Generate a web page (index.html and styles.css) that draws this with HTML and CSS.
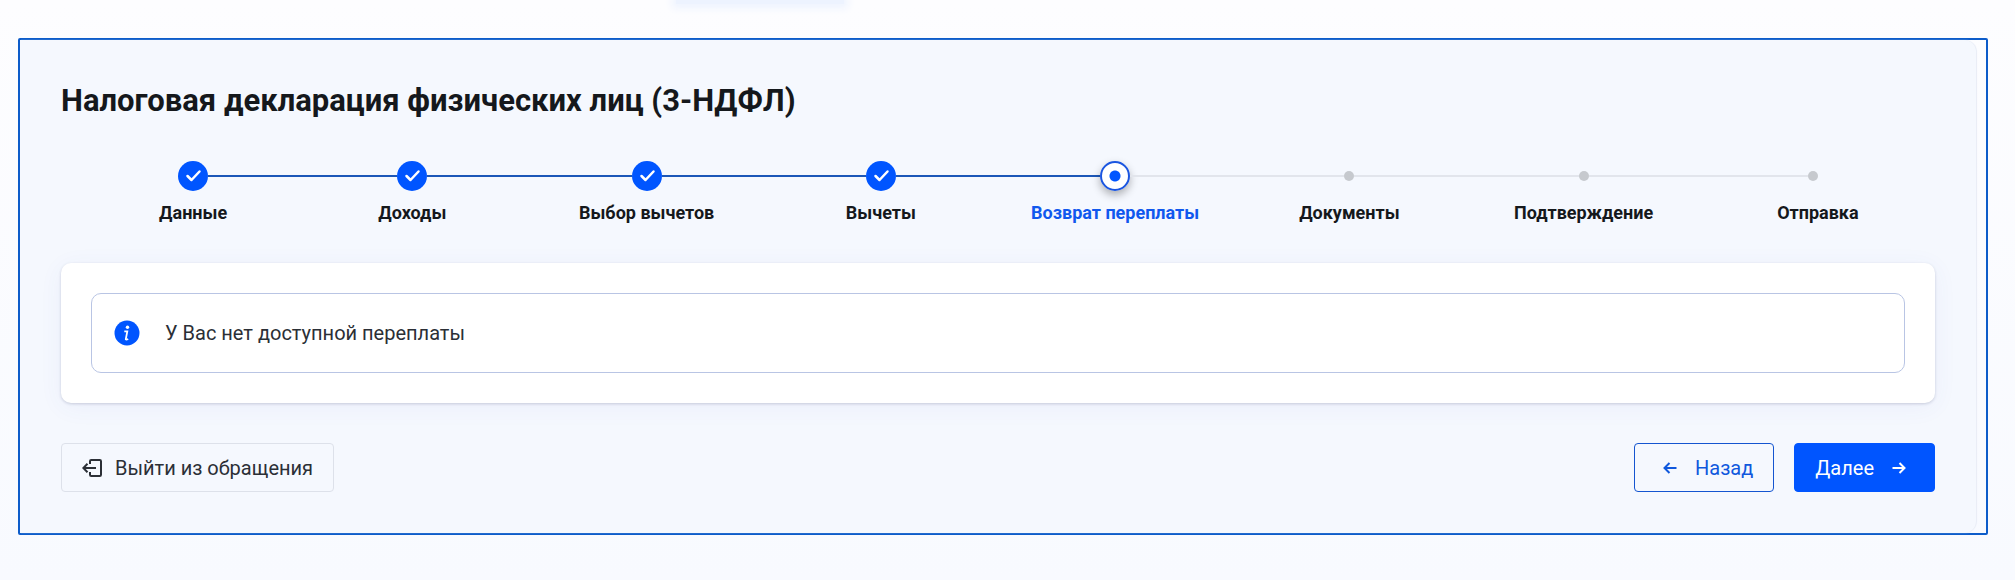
FILE: index.html
```html
<!DOCTYPE html>
<html lang="ru">
<head>
  <meta charset="UTF-8" />
  <meta name="viewport" content="width=device-width, initial-scale=1.0"/>
  <title>Налоговая декларация физических лиц (3-НДФЛ)</title>
  <link rel="stylesheet" href="styles.css">
</head>
<body>

  <div class="top-strip">
    <div class="top-shadow"></div>
  </div>

  <main class="frame">
    <section class="panel">
      <h1>Налоговая декларация физических лиц (3-НДФЛ)</h1>

      <ol class="steps">
        <li class="step done">
          <div class="track">
            <span class="marker"><svg viewBox="0 0 30 30"><path d="M9.500 15l4 4 8-8.500"/></svg></span>
          </div>
          <span class="label">Данные</span>
        </li>
        <li class="step done">
          <div class="track">
            <span class="marker"><svg viewBox="0 0 30 30"><path d="M9.500 15l4 4 8-8.500"/></svg></span>
          </div>
          <span class="label">Доходы</span>
        </li>
        <li class="step done">
          <div class="track">
            <span class="marker"><svg viewBox="0 0 30 30"><path d="M9.500 15l4 4 8-8.500"/></svg></span>
          </div>
          <span class="label">Выбор вычетов</span>
        </li>
        <li class="step done">
          <div class="track">
            <span class="marker"><svg viewBox="0 0 30 30"><path d="M9.500 15l4 4 8-8.500"/></svg></span>
          </div>
          <span class="label">Вычеты</span>
        </li>
        <li class="step current" aria-current="step">
          <div class="track">
            <span class="marker"></span>
          </div>
          <span class="label">Возврат переплаты</span>
        </li>
        <li class="step">
          <div class="track">
            <span class="marker"></span>
          </div>
          <span class="label">Документы</span>
        </li>
        <li class="step">
          <div class="track">
            <span class="marker"></span>
          </div>
          <span class="label">Подтверждение</span>
        </li>
        <li class="step">
          <div class="track">
            <span class="marker"></span>
          </div>
          <span class="label">Отправка</span>
        </li>
      </ol>

      <div class="card">
        <div class="notice">
          <svg class="notice-icon" viewBox="0 0 26 26">
            <circle cx="13" cy="13" r="12.500" fill="#0055ff"/>
            <circle cx="13.500" cy="7.300" r="1.700" fill="#fff"/>
            <path d="M10.300 11.300h3l-1.500 7.700q-.1 1.200 2.400 0" fill="none" stroke="#fff" stroke-width="1.800"/>
          </svg>
          <p>У Вас нет доступной переплаты</p>
        </div>
      </div>

      <div class="actions">
        <button type="button" class="btn btn-exit">
          <svg class="icon-exit" viewBox="0 0 20 20"><path d="M8 6V3.200Q8 2 9.200 2h8.600Q19 2 19 3.200v13.600q0 1.200-1.200 1.200H9.200Q8 18 8 16.800V14M14 10H1.500M5.500 5.800L1.300 10l4.200 4.200"/></svg>
          Выйти из обращения
        </button>
        <div class="nav-buttons">
          <button type="button" class="btn btn-back">
            <svg class="icon-arrow" viewBox="0 0 14 14"><path d="M13.500 7H1.500M6.500 2l-5 5 5 5"/></svg>
            Назад
          </button>
          <button type="button" class="btn btn-next">
            Далее
            <svg class="icon-arrow" viewBox="0 0 14 14"><path d="M.5 7h12M7.500 2l5 5-5 5"/></svg>
          </button>
        </div>
      </div>
    </section>
  </main>

</body>
</html>
```
FILE: styles.css
```css
* {
  box-sizing: border-box;
}

body {
  font-family: Roboto, sans-serif;
  margin: 0;
  min-height: 100vh;
  background: linear-gradient(#fdfdff, #f8faff);
  color: #2b2f36;
  font-size: 20px;
}

.top-strip {
  height: 38px;
  overflow: hidden;
}

.top-shadow {
  width: 168px;
  height: 4px;
  margin-left: 676px;
  background: #edf3ff;
  box-shadow: 0 0 8px 4px #edf3ff;
}

.frame {
  margin: 0 27px 0 18px;
  padding-right: 10px;
  border: 2px solid #0d5cca;
  border-radius: 2px;
}

.panel {
  padding: 41px;
  background: #f5f8fe;
  border-radius: 0 12px 12px 0;
  box-shadow: 1px 0 1px #e8ecf6;
}

h1 {
  margin: 0 0 40px;
  font-size: 31px;
  line-height: 40px;
  font-weight: bold;
  color: #15181c;
}

.steps {
  display: grid;
  grid-template-columns: repeat(8, 1fr);
  margin: 0 0 38px;
  padding: 0;
  list-style: none;
}

.step {
  text-align: center;
}

.step:first-child {
  padding-left: 30px;
}

.step:last-child .track {
  padding-right: 10px;
}

.track {
  display: flex;
  align-items: center;
  height: 30px;
  margin-bottom: 10px;
}

.track::before,
.track::after {
  content: "";
  flex: 1;
  height: 2px;
  background: #e2e5ec;
}

.done .track::before,
.done .track::after,
.current .track::before {
  background: #1c57b8;
}

.step:first-child .track::before,
.step:last-child .track::after {
  background: none;
}

.marker {
  width: 10px;
  height: 10px;
  border-radius: 50%;
  background: #c6c9ce;
}

.done .marker {
  width: 30px;
  height: 30px;
  background: #0055ff;
}

.marker svg {
  display: block;
  fill: none;
  stroke: #fff;
  stroke-width: 2.5;
  stroke-linecap: round;
  stroke-linejoin: round;
}

.current .marker {
  width: 30px;
  height: 30px;
  border: 2px solid #1a55e0;
  background: radial-gradient(circle, #0055ff 5px, #fff 6px);
  box-shadow: 0 4px 8px rgba(0, 0, 0, 0.3);
}

.label {
  display: block;
  font-size: 18px;
  line-height: 24px;
  font-weight: bold;
  color: #15181c;
}

.current .label {
  color: #1058ee;
}

.card {
  padding: 30px;
  background: #fff;
  border-radius: 10px;
  box-shadow: 0 1px 3px rgba(40, 50, 90, 0.2), 0 4px 24px rgba(60, 80, 200, 0.06);
}

.notice {
  display: flex;
  align-items: center;
  gap: 25px;
  padding: 24px 22px;
  border: 1px solid #b9c5e4;
  border-radius: 10px;
}

.notice-icon {
  width: 26px;
  height: 26px;
}

.notice p {
  margin: 0;
  line-height: 30px;
}

.actions {
  display: flex;
  justify-content: space-between;
  margin-top: 40px;
}

.nav-buttons {
  display: flex;
  gap: 20px;
}

.btn {
  display: flex;
  align-items: center;
  height: 49px;
  padding: 0 20px;
  border: 1px solid #dde1ea;
  border-radius: 4px;
  background: transparent;
  font-family: inherit;
  font-size: 20px;
  color: #2b2f36;
  cursor: pointer;
}

.btn svg {
  fill: none;
  stroke: currentColor;
  stroke-width: 2;
}

.btn-exit {
  gap: 13px;
}

.btn-back {
  gap: 18px;
  padding-left: 28px;
  border-color: #1455d0;
  color: #1058dd;
}

.btn-next {
  gap: 18px;
  padding-right: 28px;
  border-color: #0055ff;
  background: #0055ff;
  color: #fff;
}

.icon-exit {
  width: 20px;
  height: 20px;
}

.icon-arrow {
  width: 14px;
  height: 14px;
}
```
